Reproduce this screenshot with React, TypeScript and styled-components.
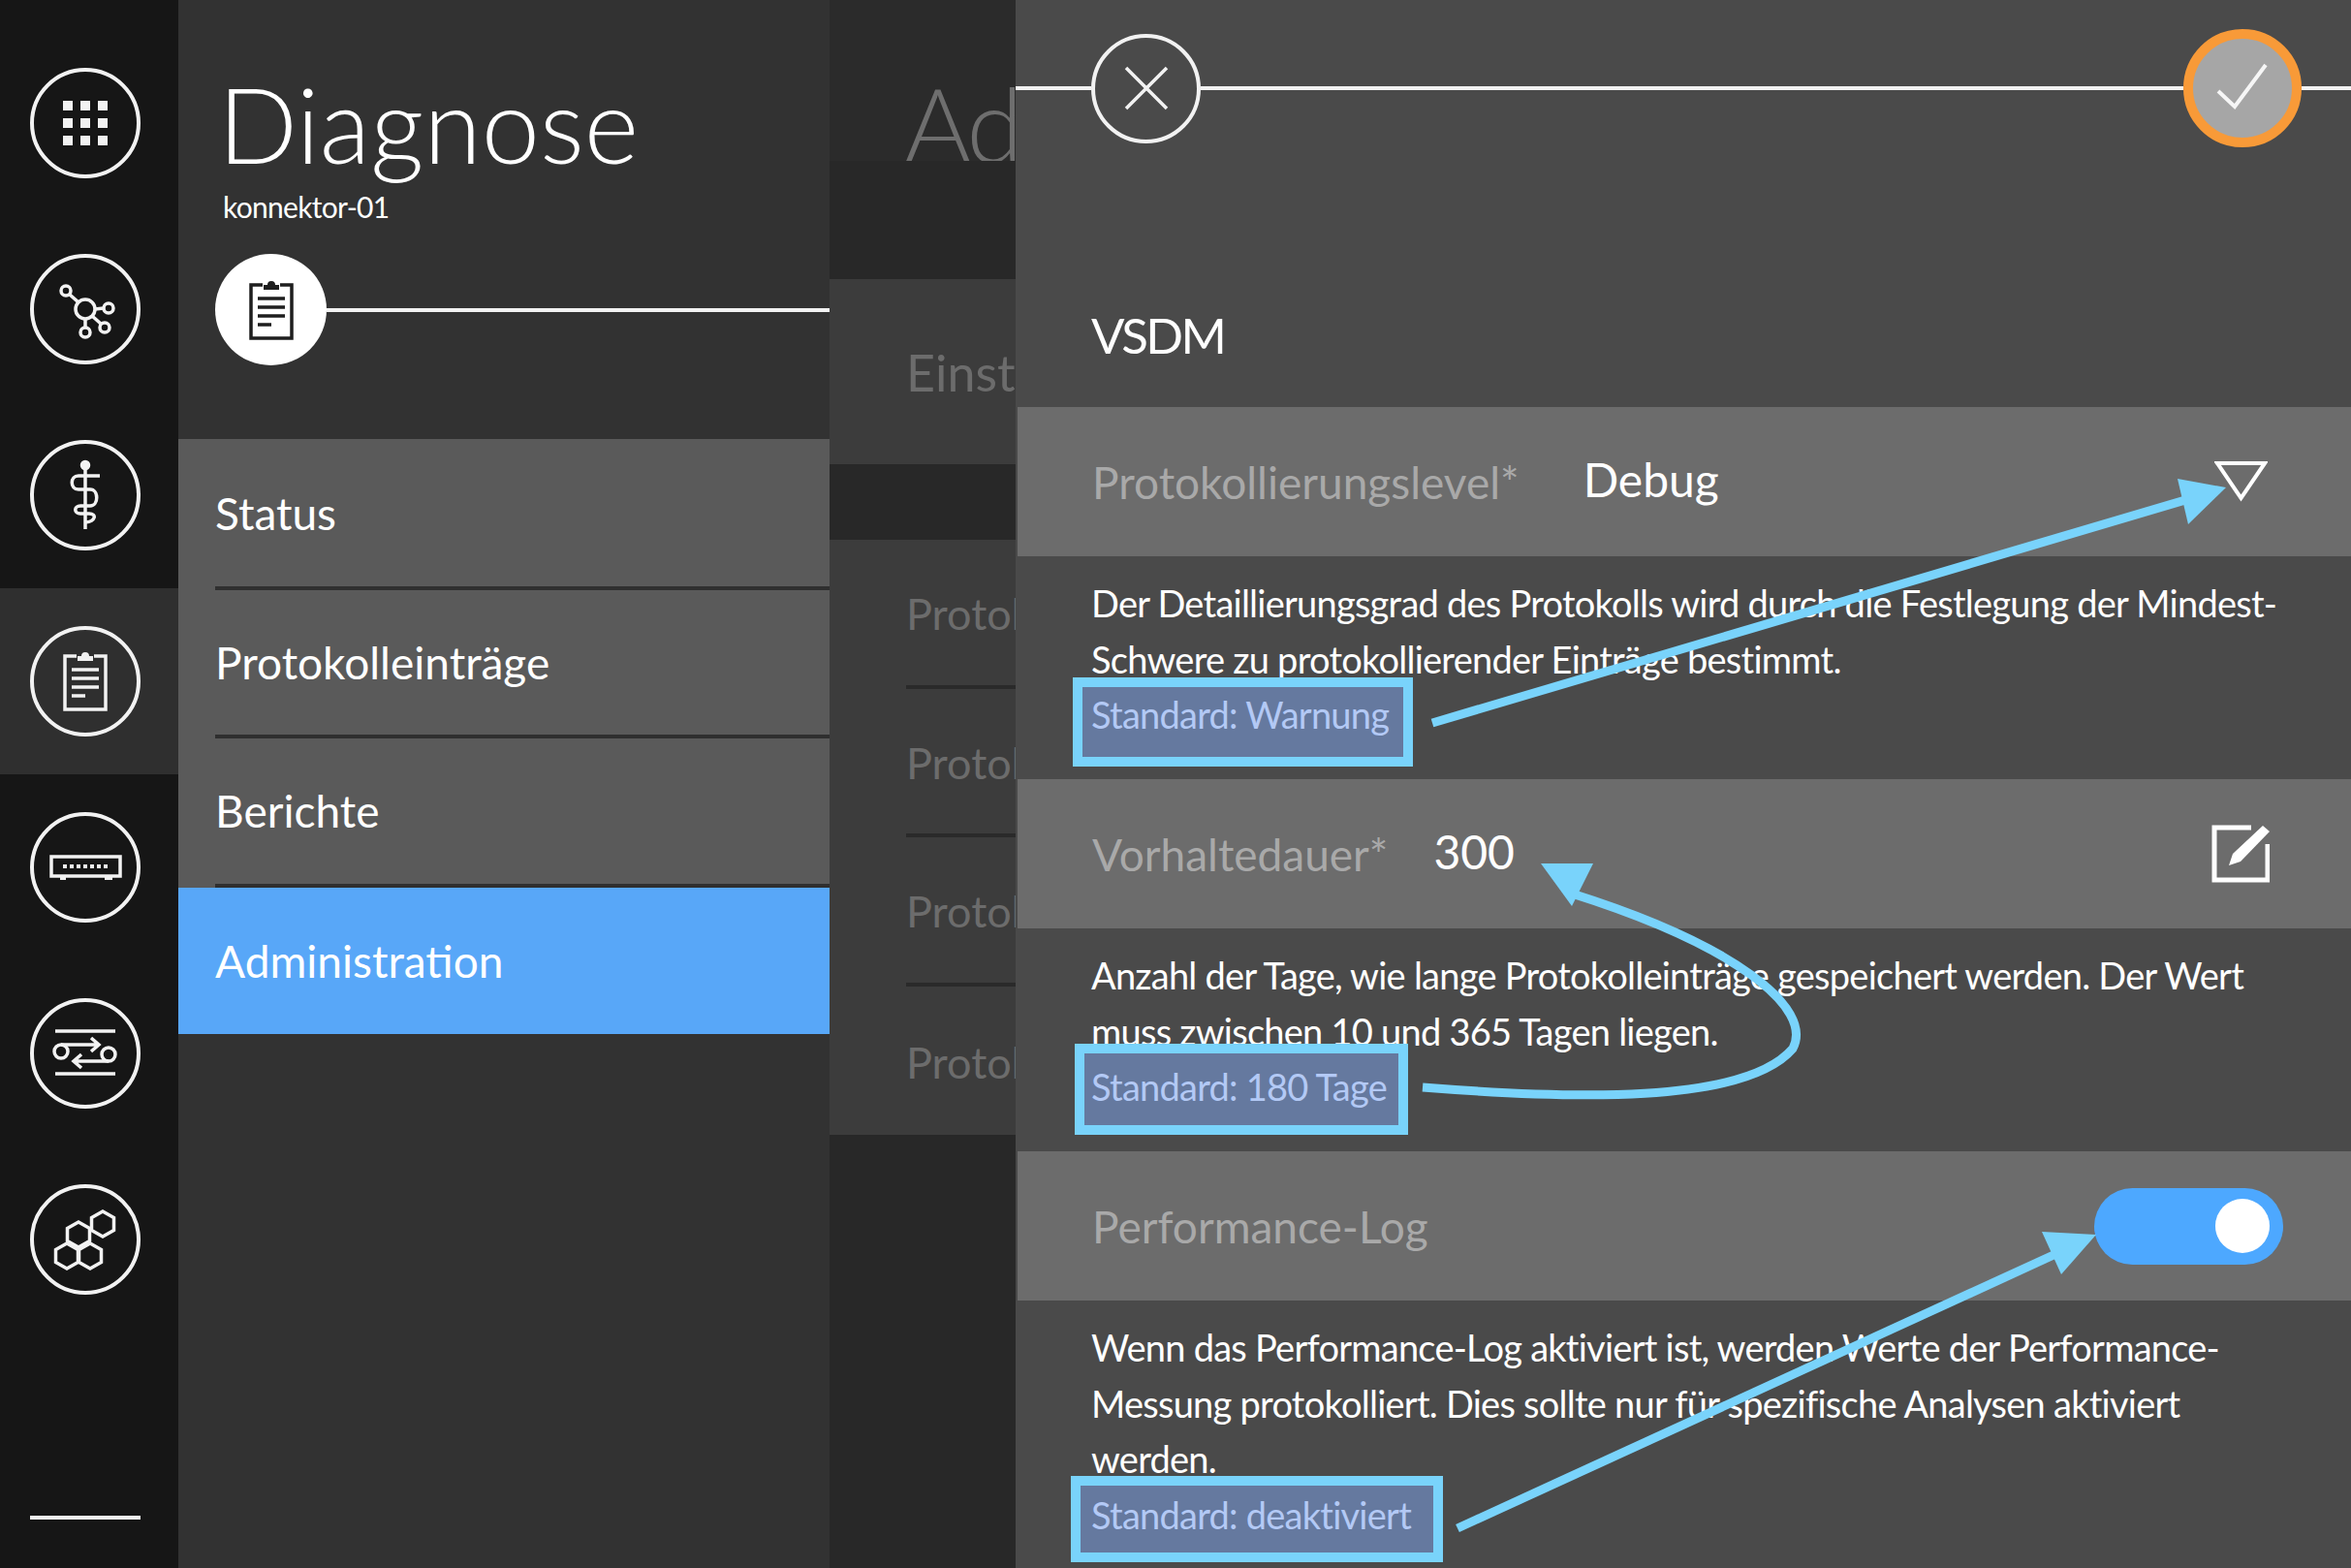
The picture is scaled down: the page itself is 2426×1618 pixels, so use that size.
import React from 'react';
import styled, { createGlobalStyle } from 'styled-components';

const Global = createGlobalStyle`
  html, body { margin: 0; padding: 0; background: #161616; }
  * { box-sizing: border-box; }
`;

const Page = styled.div`
  position: relative;
  display: flex;
  width: 2426px;
  height: 1618px;
  overflow: hidden;
  font-family: Lato, "Noto Sans", sans-serif;
  color: #fff;
`;

/* left rail */
const Rail = styled.nav`
  display: flex;
  flex-direction: column;
  width: 184px;
  padding-top: 31px;
  background: #161616;
`;

const RailItem = styled.div<{ $active?: boolean }>`
  display: flex;
  align-items: center;
  justify-content: center;
  height: 192px;
  flex: none;
  padding-right: 8px;
  background: ${(p) => (p.$active ? '#2f2f2f' : 'transparent')};
`;

const RailFoot = styled.div`
  width: 114px;
  height: 4px;
  margin: auto 0 50px 31px;
  background: #f2f2f2;
`;

/* menu column */
const MenuPanel = styled.section`
  display: flex;
  flex-direction: column;
  width: 672px;
  background: #323232;
`;

const MenuHead = styled.header`
  height: 453px;
  padding-top: 57px;
`;

const Title = styled.h1`
  margin: 0 0 0 41px;
  font-size: 108px;
  font-weight: 300;
  line-height: 140px;
`;

const SubTitle = styled.div`
  margin: -4px 0 0 46px;
  font-size: 30px;
  letter-spacing: -0.7px;
  line-height: 40px;
`;

const BadgeRow = styled.div`
  display: flex;
  align-items: center;
  margin: 29px 0 0 38px;
`;

const Badge = styled.div`
  display: flex;
  align-items: center;
  justify-content: center;
  flex: none;
  width: 115px;
  height: 115px;
  border-radius: 50%;
  background: #fff;
  color: #1e1e1e;
`;

const Rule = styled.div<{ $width?: number }>`
  height: 4px;
  background: #f2f2f2;
  flex: ${(p) => (p.$width ? `0 0 ${p.$width}px` : '1')};
`;

const MenuList = styled.div`
  padding-top: 2px;
  background: #5a5a5a;
`;

const MenuItem = styled.div<{ $active?: boolean }>`
  height: ${(p) => (p.$active ? 151.5 : 153.5)}px;
  padding-left: 38px;
  background: ${(p) => (p.$active ? '#58a7f8' : '#5a5a5a')};
`;

const MenuLabel = styled.div<{ $last?: boolean }>`
  display: flex;
  align-items: center;
  height: 100%;
  font-size: 46px;
  border-bottom: ${(p) => (p.$last ? 'none' : '4px solid #2f2f2f')};
`;

/* dimmed middle column */
const MidPanel = styled.section`
  display: flex;
  flex-direction: column;
  width: 192px;
  overflow: hidden;
  background: #282828;
  white-space: nowrap;
`;

const MidHead = styled.div`
  height: 166px;
  padding: 57px 0 0 77px;
  overflow: hidden;
  background: #2b2b2b;
  color: #6e6e6e;
  font-size: 106px;
  font-weight: 300;
  letter-spacing: -4px;
  line-height: 140px;
`;

const MidCard = styled.div`
  display: flex;
  align-items: center;
  height: 191px;
  margin-top: 122px;
  padding-left: 79px;
  background: #3c3c3c;
  color: #6c6c6c;
  font-size: 52px;
`;

const MidList = styled.div`
  margin-top: 78px;
  padding-left: 79px;
  background: #3c3c3c;
`;

const MidRow = styled.div<{ $last?: boolean }>`
  display: flex;
  align-items: center;
  height: 153.5px;
  padding-top: 3px;
  color: #6c6c6c;
  font-size: 45px;
  border-bottom: ${(p) => (p.$last ? 'none' : '4px solid #2a2a2a')};
`;

/* settings drawer */
const Drawer = styled.section`
  flex: 1;
  background: #4a4a4a;
`;

const ActionRow = styled.div`
  display: flex;
  align-items: center;
  height: 182px;
`;

const RoundButton = styled.div<{ $confirm?: boolean }>`
  display: flex;
  align-items: center;
  justify-content: center;
  flex: none;
  width: ${(p) => (p.$confirm ? 122 : 113)}px;
  height: ${(p) => (p.$confirm ? 122 : 113)}px;
  border-radius: 50%;
  border: ${(p) => (p.$confirm ? '10px solid #f89a38' : '4px solid #f2f2f2')};
  background: ${(p) => (p.$confirm ? '#a6a6a6' : 'transparent')};
`;

const Heading = styled.h2`
  display: flex;
  align-items: center;
  height: 238px;
  margin: 0;
  padding: 89px 0 0 78px;
  font-size: 51px;
  font-weight: 400;
  letter-spacing: -2.6px;
`;

const SettingRow = styled.div`
  display: flex;
  align-items: center;
  height: 154px;
  margin-left: 2px;
  padding-left: 77px;
  background: #6c6c6c;
`;

const RowLabel = styled.div`
  color: #a9a9a9;
  font-size: 46px;
`;

const RowValue = styled.div<{ $gap: number }>`
  margin-left: ${(p) => p.$gap}px;
  margin-top: -6px;
  font-size: 48px;
`;

const RowControl = styled.div<{ $right: number }>`
  display: flex;
  margin-left: auto;
  margin-right: ${(p) => p.$right}px;
`;

const Toggle = styled.div`
  display: flex;
  align-items: center;
  justify-content: flex-end;
  width: 195px;
  height: 79px;
  padding-right: 14px;
  border-radius: 40px;
  background: #4da8ff;
`;

const Knob = styled.div`
  width: 56px;
  height: 56px;
  border-radius: 50%;
  background: #fff;
`;

const Description = styled.div`
  height: 230px;
  padding: 20px 0 0 78px;
  font-size: 38px;
  letter-spacing: -0.75px;
  line-height: 57.5px;
  white-space: nowrap;
`;

const Standard = styled.div<{ $box: string }>`
  position: relative;
  z-index: 0;
  display: inline-block;
  vertical-align: top;
  color: #b3c9f5;

  &::before {
    content: '';
    position: absolute;
    z-index: -1;
    inset: ${(p) => p.$box};
    border: 10px solid #79d3fb;
    background: #65799f;
  }
`;

const Overlay = styled.svg`
  position: absolute;
  top: 0;
  left: 0;
  pointer-events: none;
`;

const RING = { cx: 57, cy: 57, r: 55, fill: 'none', stroke: '#f2f2f2', strokeWidth: 4 };

function RailIcon({ children }: { children: React.ReactNode }) {
  return (
    <svg width="114" height="114" viewBox="0 0 114 114" fill="none" stroke="#f2f2f2" strokeWidth="3.5">
      <circle {...RING} />
      {children}
    </svg>
  );
}

function ClipboardGlyph() {
  return (
    <g stroke="currentColor" strokeWidth="3.5" fill="none">
      <path d="M48 31 H36 V86 H78 V31 H66" />
      <path d="M49 36 V31 H53 A4 4 0 0 1 61 31 H65 V36 Z" fill="currentColor" stroke="none" />
      <path d="M43 45 H71 M43 54 H71 M43 63 H71 M43 72 H57" />
    </g>
  );
}

function hex(cx: number, cy: number) {
  const w = 11.5;
  const h = 13;
  return `${cx},${cy - h} ${cx + w},${cy - h / 2} ${cx + w},${cy + h / 2} ${cx},${cy + h} ${cx - w},${cy + h / 2} ${cx - w},${cy - h / 2}`;
}

const menu = ['Status', 'Protokolleinträge', 'Berichte'];

export default function App() {
  return (
    <Page>
      <Global />
      <Rail>
        <RailItem>
          <RailIcon>
            <g fill="#f2f2f2" stroke="none">
              {[39, 57, 75].map((y) =>
                [39, 57, 75].map((x) => <rect key={`${x}-${y}`} x={x - 5} y={y - 5} width="10" height="10" />)
              )}
            </g>
          </RailIcon>
        </RailItem>
        <RailItem>
          <RailIcon>
            <circle cx="57" cy="57" r="10" />
            <circle cx="37" cy="38" r="5" />
            <circle cx="81" cy="56" r="5" />
            <circle cx="77" cy="76" r="5" />
            <circle cx="57" cy="81" r="5" />
            <path d="M41 42 L50 50 M67 57 L76 56 M64 64 L73 72 M57 67 V76" />
          </RailIcon>
        </RailItem>
        <RailItem>
          <RailIcon>
            <circle cx="57" cy="26" r="3.5" fill="#f2f2f2" />
            <path d="M57 26 V92" />
            <path d="M72 37 H50 C41 37 41 51 50 51 H62 C71 51 71 68 62 68 H52 C45 68 45 76 52 76 H61 C69 76 68 84 57 85" />
          </RailIcon>
        </RailItem>
        <RailItem $active>
          <RailIcon>
            <g color="#f2f2f2">
              <ClipboardGlyph />
            </g>
          </RailIcon>
        </RailItem>
        <RailItem>
          <RailIcon>
            <rect x="22" y="46" width="71" height="20" />
            <path d="M31 68 H37 M77 68 H85" strokeWidth="4" />
            <g fill="#f2f2f2" stroke="none">
              {[36, 43, 50, 57, 64, 71, 78].map((x) => (
                <rect key={x} x={x - 2} y="54" width="4" height="4" />
              ))}
            </g>
          </RailIcon>
        </RailItem>
        <RailItem>
          <RailIcon>
            <path d="M26 34 H88 M26 78 H88" />
            <circle cx="32" cy="55" r="7" />
            <circle cx="81" cy="58" r="7" />
            <path d="M32 48 H70 M63 41 L71 48 L63 55" />
            <path d="M81 65 H46 M53 58 L45 65 L53 72" />
          </RailIcon>
        </RailItem>
        <RailItem>
          <RailIcon>
            {[[75, 41], [50, 52], [38, 74], [62, 74]].map(([x, y]) => (
              <polygon key={`${x}-${y}`} points={hex(x, y)} />
            ))}
          </RailIcon>
        </RailItem>
        <RailFoot />
      </Rail>

      <MenuPanel>
        <MenuHead>
          <Title>Diagnose</Title>
          <SubTitle>konnektor-01</SubTitle>
          <BadgeRow>
            <Badge>
              <svg width="114" height="114" viewBox="0 0 114 114">
                <ClipboardGlyph />
              </svg>
            </Badge>
            <Rule />
          </BadgeRow>
        </MenuHead>
        <MenuList>
          {menu.map((m) => (
            <MenuItem key={m}>
              <MenuLabel>{m}</MenuLabel>
            </MenuItem>
          ))}
          <MenuItem $active>
            <MenuLabel $last>Administration</MenuLabel>
          </MenuItem>
        </MenuList>
      </MenuPanel>

      <MidPanel>
        <MidHead>Administration</MidHead>
        <MidCard>Einstellungen</MidCard>
        <MidList>
          <MidRow>Protokollierung</MidRow>
          <MidRow>Protokollierung</MidRow>
          <MidRow>Protokollierung</MidRow>
          <MidRow $last>Protokollierung</MidRow>
        </MidList>
      </MidPanel>

      <Drawer>
        <ActionRow>
          <Rule $width={78} />
          <RoundButton>
            <svg width="50" height="50" viewBox="0 0 50 50" fill="none" stroke="#f2f2f2" strokeWidth="3.5">
              <path d="M4 4 L46 46 M46 4 L4 46" />
            </svg>
          </RoundButton>
          <Rule />
          <RoundButton $confirm>
            <svg width="60" height="54" viewBox="0 0 60 54" fill="none" stroke="#f6f6f6" strokeWidth="4">
              <path d="M5 30 L22 46 L54 3" />
            </svg>
          </RoundButton>
          <Rule $width={51} />
        </ActionRow>
        <Heading>VSDM</Heading>

        <SettingRow>
          <RowLabel>Protokollierungslevel*</RowLabel>
          <RowValue $gap={66}>Debug</RowValue>
          <RowControl $right={86}>
            <svg width="55" height="42" viewBox="0 0 55 42" fill="none" stroke="#fff" strokeWidth="4">
              <path d="M3 2 H52 L27.5 38 Z" />
            </svg>
          </RowControl>
        </SettingRow>
        <Description>
          Der Detaillierungsgrad des Protokolls wird durch die Festlegung der Mindest-
          <br />
          Schwere zu protokollierender Einträge bestimmt.
          <br />
          <Standard $box="-10px -25px -24px -19px">Standard: Warnung</Standard>
        </Description>

        <SettingRow>
          <RowLabel>Vorhaltedauer*</RowLabel>
          <RowValue $gap={47}>300</RowValue>
          <RowControl $right={84}>
            <svg width="60" height="60" viewBox="0 0 60 60" fill="none" stroke="#fff" strokeWidth="5">
              <path d="M41 3 H3 V57 H58 V20" />
              <polygon points="18,42 22,30 53,1 60,7 30,38" fill="#fff" stroke="none" />
            </svg>
          </RowControl>
        </SettingRow>
        <Description>
          Anzahl der Tage, wie lange Protokolleinträge gespeichert werden. Der Wert
          <br />
          muss zwischen 10 und 365 Tagen liegen.
          <br />
          <Standard $box="-16px -22px -20px -17px">Standard: 180 Tage</Standard>
        </Description>

        <SettingRow>
          <RowLabel>Performance-Log</RowLabel>
          <RowControl $right={70}>
            <Toggle>
              <Knob />
            </Toggle>
          </RowControl>
        </SettingRow>
        <Description>
          Wenn das Performance-Log aktiviert ist, werden Werte der Performance-
          <br />
          Messung protokolliert. Dies sollte nur für spezifische Analysen aktiviert
          <br />
          werden.
          <br />
          <Standard $box="-12px -33px -20px -21px">Standard: deaktiviert</Standard>
        </Description>
      </Drawer>

      <Overlay width="2426" height="1618" viewBox="0 0 2426 1618" fill="none" stroke="#79d3fb" strokeWidth="9">
        <path d="M1478 746 L2272 511" />
        <polygon points="2297,503 2247,494 2258,541" fill="#79d3fb" stroke="none" />
        <path d="M1468 1122 C1620 1134 1800 1140 1850 1082 C1872 1040 1790 975 1622 922" />
        <polygon points="1590,891 1644,891 1622,935" fill="#79d3fb" stroke="none" />
        <path d="M1504 1577 L2130 1290" />
        <polygon points="2163,1274 2107,1271 2127,1315" fill="#79d3fb" stroke="none" />
      </Overlay>
    </Page>
  );
}
